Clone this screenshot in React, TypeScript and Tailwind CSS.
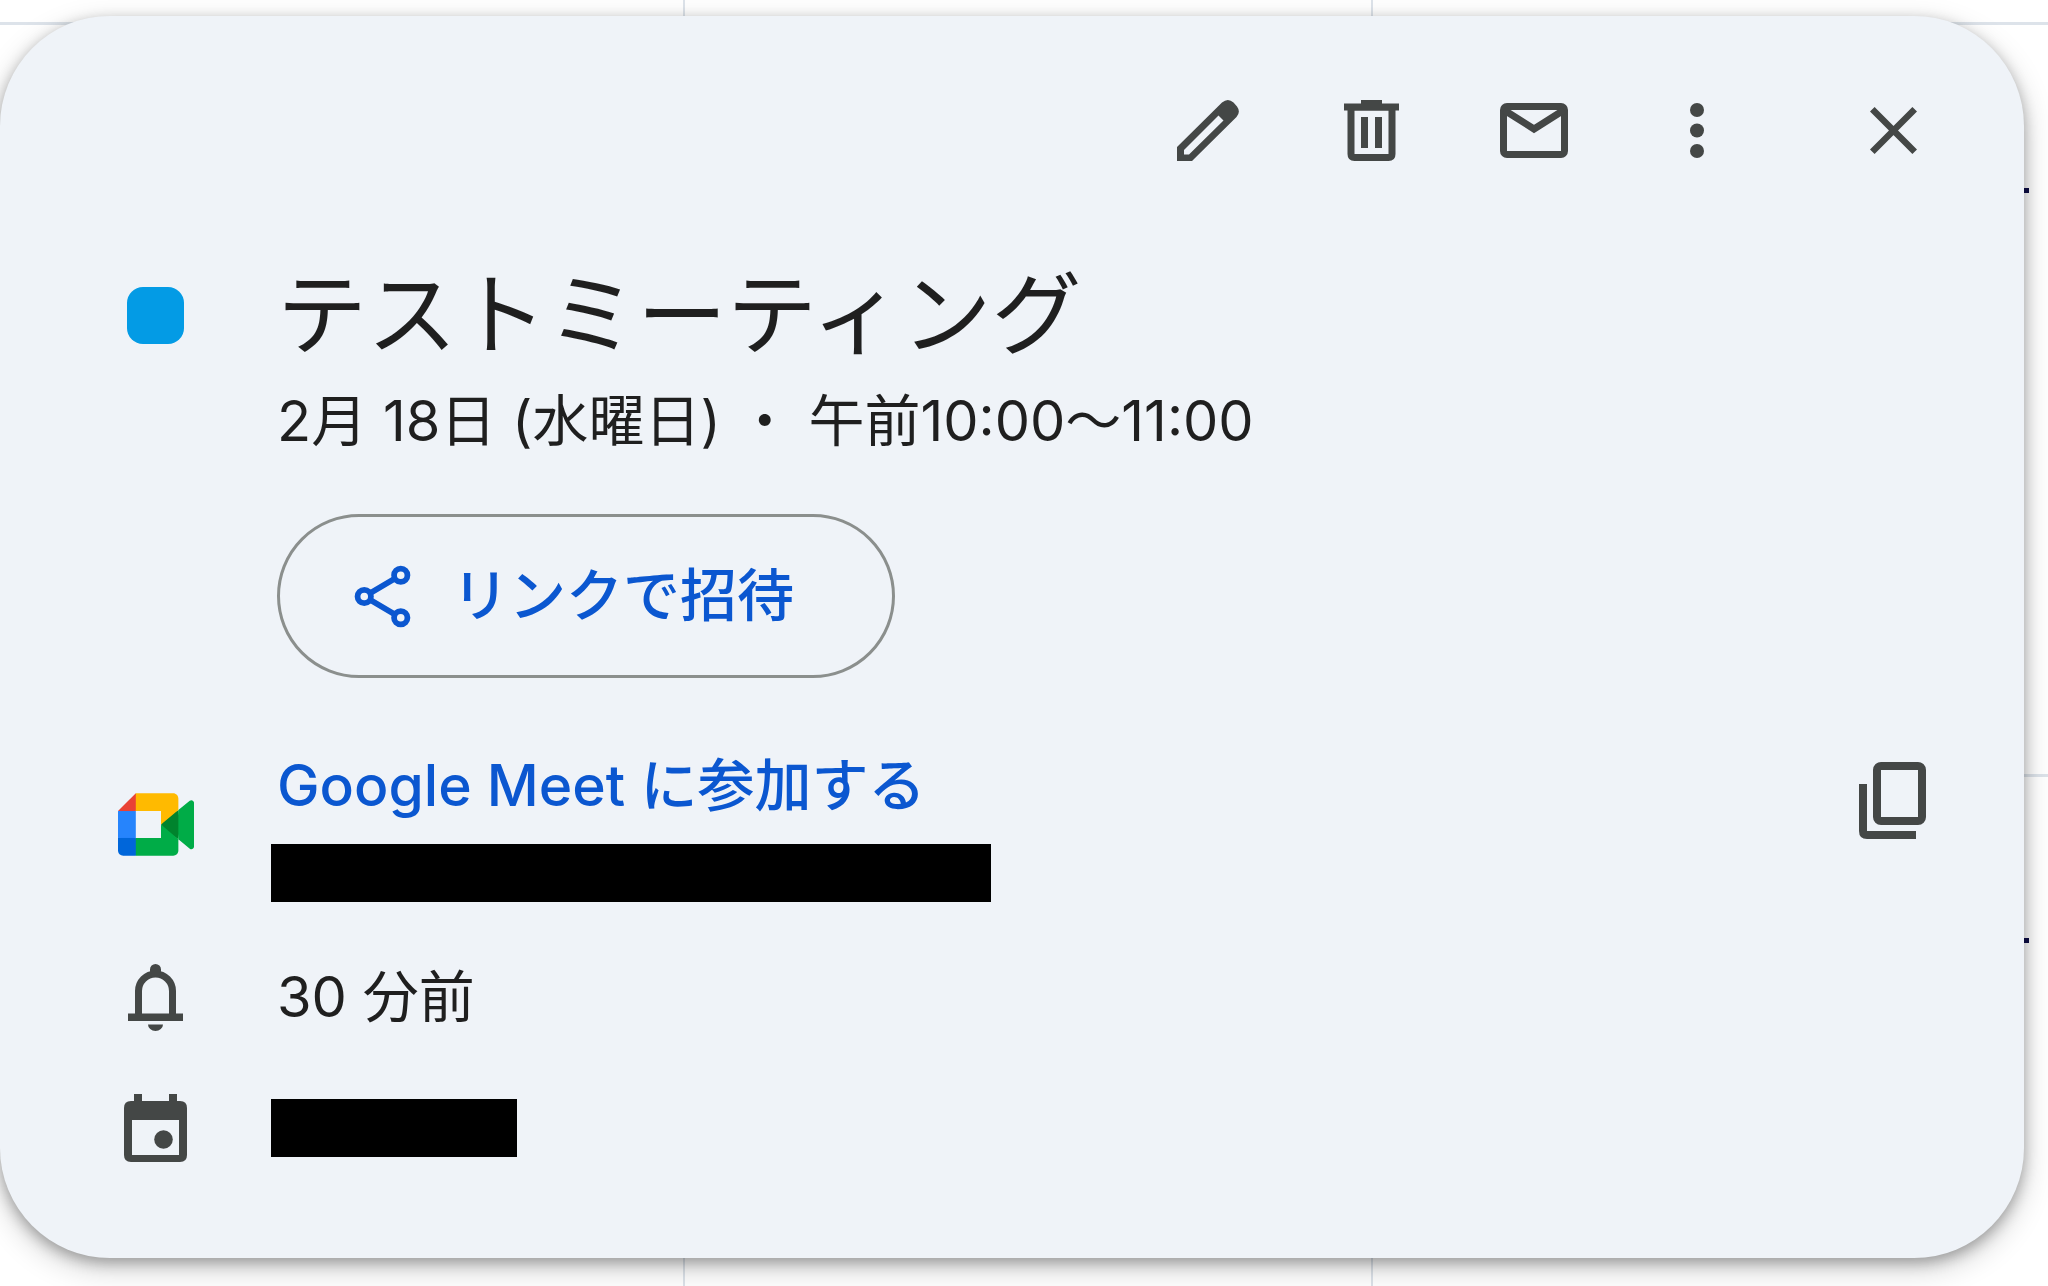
import type { ReactNode } from "react";

const IconButton = ({ label, children }: { label: string; children: ReactNode }) => {
    return (
        <button type="button" aria-label={label} className="flex h-20 w-20 items-center justify-center rounded-full text-[#444746]">
            {children}
        </button>
    );
};

const EditIcon = () => (
    <svg width="62" height="61" viewBox="0 0 62 61" fill="currentColor">
        <path fillRule="evenodd" d="M0 61V47L45 2.500Q51-2.500 56.500 2.500L60 6.500Q64 12 59.500 17L15 61ZM7 50V54.500H12L46.500 20.500L41.500 15.500Z" />
    </svg>
);

const TrashIcon = () => (
    <svg width="55" height="61" viewBox="0 0 55 61" fill="currentColor">
        <path d="M17 0H38V3.500H55V10.500H0V3.500H17Z" />
        <path fillRule="evenodd" d="M3.500 8H51.500V54Q51.500 61 44.500 61H10.500Q3.500 61 3.500 54ZM10.500 10.500V54H44.500V10.500Z" />
        <path d="M17 17H24V48H17ZM31 17H38V48H31Z" />
    </svg>
);

const MailIcon = () => (
    <svg width="68" height="55" viewBox="0 0 68 55" fill="none" stroke="currentColor">
        <rect x="3.5" y="3.5" width="61" height="48" rx="3.5" strokeWidth="7" />
        <path d="M4 7L34 26L64 7" strokeWidth="7" />
    </svg>
);

const MoreIcon = () => (
    <svg width="14" height="55" viewBox="0 0 14 55" fill="currentColor">
        <circle cx="7" cy="7" r="7" />
        <circle cx="7" cy="27.5" r="7" />
        <circle cx="7" cy="48" r="7" />
    </svg>
);

const CloseIcon = () => (
    <svg width="47" height="47" viewBox="0 0 47 47" fill="none" stroke="currentColor" strokeWidth="6.5">
        <path d="M2.300 2.300L44.700 44.700M44.700 2.300L2.300 44.700" />
    </svg>
);

const ShareIcon = () => (
    <svg width="73" height="73" viewBox="0 0 24 24" fill="none" stroke="currentColor" strokeWidth="1.9">
        <circle cx="6" cy="12" r="2.2" />
        <circle cx="18" cy="5" r="2.2" />
        <circle cx="18" cy="19" r="2.2" />
        <path d="M7.900 10.900L16.100 6.100M7.900 13.100L16.100 17.900" />
    </svg>
);

const MeetIcon = () => (
    <svg width="76" height="63" viewBox="0 0 87.5 72">
        <path fill="#00832d" d="M49.5 36l8.53 9.75 11.47 7.33 2-17.02-2-16.64-11.69 6.44z" />
        <path fill="#0066da" d="M0 51.500V66c0 3.315 2.685 6 6 6h14.500l3-10.960-3-9.540-9.950-3z" />
        <path fill="#e94235" d="M20.500 0L0 20.500l10.550 3 9.950-3 2.950-9.410z" />
        <path fill="#2684fc" d="M20.500 20.500H0v31h20.500z" />
        <path fill="#00ac47" d="M82.600 8.680L69.500 19.420v33.660l13.160 10.790c1.970 1.540 4.850.135 4.850-2.370V11c0-2.535-2.945-3.925-4.910-2.320zM49.500 36v15.500h-29V72h43c3.315 0 6-2.685 6-6V53.080z" />
        <path fill="#ffba00" d="M63.500 0h-43v20.500h29V36l20-16.570V6c0-3.315-2.685-6-6-6z" />
    </svg>
);

const CopyIcon = () => (
    <svg width="68" height="77" viewBox="0 0 68 77" fill="none" stroke="currentColor" strokeWidth="8">
        <rect x="18" y="4" width="45" height="55" rx="4" />
        <path d="M4 22V69Q4 73 8 73H57" />
    </svg>
);

const BellIcon = () => (
    <svg width="55" height="67" viewBox="0 0 55 67" fill="currentColor">
        <path d="M10.500 51V27a17 17 0 0 1 34 0V51" fill="none" stroke="currentColor" strokeWidth="7" />
        <path d="M22 9V5.500a5.500 5.500 0 0 1 11 0V9ZM0 49.500H55V57H0ZM20 60.500H35a7.500 6.500 0 0 1-15 0Z" />
    </svg>
);

const EventIcon = () => (
    <svg width="63" height="68" viewBox="0 0 63 68" fill="currentColor">
        <path d="M10 0H18V9H10ZM45 0H53V9H45Z" />
        <path fillRule="evenodd" d="M7 7H56Q63 7 63 14V61Q63 68 56 68H7Q0 68 0 61V14Q0 7 7 7ZM8 26V61H55V26Z" />
        <circle cx="39.5" cy="45.5" r="9.3" />
    </svg>
);

const Row = ({ icon, children }: { icon: ReactNode; children: ReactNode }) => {
    return (
        <div className="flex items-center gap-20 pr-[97px] pl-[114px] text-[#444746]">
            <div className="flex w-[83px] shrink-0 justify-center">{icon}</div>
            {children}
        </div>
    );
};

const CalendarGrid = () => {
    return (
        <div className="col-start-1 row-start-1 grid grid-cols-[685px_688px_1fr] grid-rows-[25px_752px_1fr]">
            <div className="border-r-2 border-b-3 border-[#dde3ea]"></div>
            <div className="border-r-2 border-b-3 border-[#dde3ea]"></div>
            <div className="border-b-3 border-[#dde3ea]"></div>
            <div className="border-r-2 border-b-3 border-[#dde3ea]"></div>
            <div className="border-r-2 border-b-3 border-[#dde3ea]"></div>
            <div className="border-b-3 border-[#dde3ea]"></div>
            <div className="border-r-2 border-[#dde3ea]"></div>
            <div className="border-r-2 border-[#dde3ea]"></div>
            <div></div>
        </div>
    );
};

export default function App() {
    return (
        <div className="relative grid min-h-screen overflow-hidden bg-white font-['Inter','Noto_Sans_CJK_JP',sans-serif] text-[56px] leading-20 text-[#1f1f1f]">
            <CalendarGrid />
            <section className="z-10 col-start-1 row-start-1 mt-4 mr-6 self-start rounded-[110px] bg-[#eff3f8] pt-[74px] pb-24 shadow-[0_5px_14px_rgba(0,0,0,0.3),0_10px_28px_4px_rgba(0,0,0,0.15)]">
                <header className="flex justify-end gap-[83px] pr-[91px]">
                    <IconButton label="予定を編集"><EditIcon /></IconButton>
                    <IconButton label="予定を削除"><TrashIcon /></IconButton>
                    <IconButton label="メールを送信"><MailIcon /></IconButton>
                    <div className="flex gap-[116px]">
                        <IconButton label="オプション"><MoreIcon /></IconButton>
                        <IconButton label="閉じる"><CloseIcon /></IconButton>
                    </div>
                </header>

                <div className="mt-[88px]">
                    <Row icon={<div className="h-[57px] w-[57px] rounded-2xl bg-[#039be5]"></div>}>
                        <h1 className="text-[90px] leading-[114px] text-[#1f1f1f]">テストミーティング</h1>
                    </Row>
                </div>
                <div className="pt-[9px] pl-[277px]">
                    <p>2月 18日 (水曜日) ・ 午前10:00～11:00</p>
                    <button type="button" className="mt-[53px] flex h-[164px] items-center gap-[33px] rounded-full border-3 border-[#8b8f8d] pr-[98px] pl-[66px] text-[57px] font-medium text-[#0b57d0]">
                        <ShareIcon />
                        リンクで招待
                    </button>
                </div>

                <div className="mt-[68px]">
                    <Row icon={<MeetIcon />}>
                        <div className="flex-1">
                            <a href="#meet" className="text-[57px] font-medium text-[#0b57d0]">Google Meet に参加する</a>
                            <div className="mt-[18px] -ml-1.5 h-[58px] w-[720px] bg-black"></div>
                        </div>
                        <button type="button" aria-label="会議のリンクをコピー" className="mt-4 self-start">
                            <CopyIcon />
                        </button>
                    </Row>
                </div>
                <div className="mt-[55px]">
                    <Row icon={<BellIcon />}>
                        <p className="text-[#1f1f1f]">30 分前</p>
                    </Row>
                </div>
                <div className="mt-[57px]">
                    <Row icon={<EventIcon />}>
                        <div className="-ml-1.5 h-[58px] w-[246px] bg-black"></div>
                    </Row>
                </div>
            </section>
            <span className="absolute top-[188px] right-[19px] z-10 h-[5px] w-[5px] bg-[#0a0a3a]"></span>
            <span className="absolute top-[938px] right-[19px] z-10 h-[5px] w-[5px] bg-[#0a0a3a]"></span>
        </div>
    );
}
